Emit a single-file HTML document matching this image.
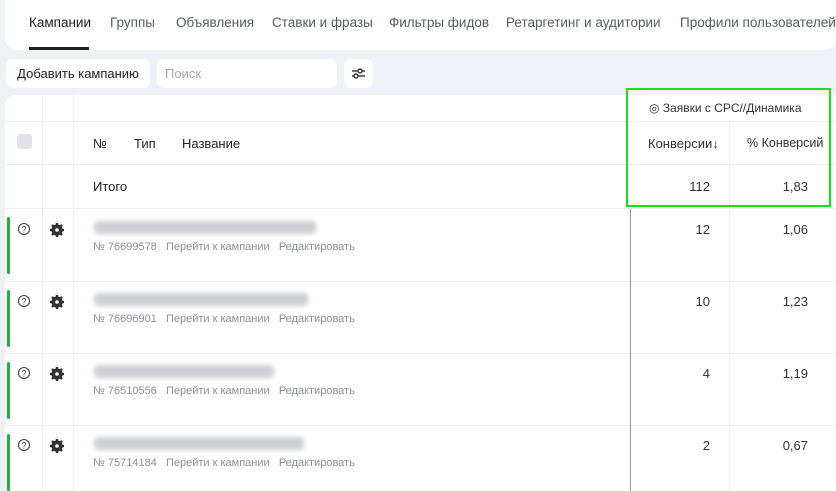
<!DOCTYPE html>
<html><head><meta charset="utf-8"><style>
body{margin:0;width:836px;height:491px;background:#eef1f6;font-family:"Liberation Sans",sans-serif;position:relative;overflow:hidden;color:#222}
.a{position:absolute;white-space:nowrap}
.tab{font-size:13.5px;color:#555c66;top:15px}
.hl{position:absolute;height:1px;background:#eceef2}
.vl{position:absolute;width:1px;background:#eceef2}
.sub{font-size:11px;color:#8a8f98}
.num{font-size:13px;color:#333;text-align:right}
.blur{position:absolute;height:13px;background:#cdd0d5;filter:blur(2.5px);border-radius:3px}
.gs{position:absolute;left:7px;width:3px;background:#1fb041;border-radius:2px}
</style></head><body>
<div class="a" style="left:5px;top:0;width:831px;height:50px;background:#fff;border-radius:0 0 12px 12px"></div>
<div class="a tab" style="left:29px;color:#222">Кампании</div>
<div class="a" style="left:29px;top:47px;width:60px;height:3px;background:#222"></div>
<div class="a tab" style="left:110px">Группы</div>
<div class="a tab" style="left:176px">Объявления</div>
<div class="a tab" style="left:272px">Ставки и фразы</div>
<div class="a tab" style="left:389px">Фильтры фидов</div>
<div class="a tab" style="left:506px">Ретаргетинг и аудитории</div>
<div class="a tab" style="left:680px">Профили пользователей</div>

<div class="a" style="left:6px;top:59px;width:144px;height:29px;background:#fff;border-radius:7px;font-size:13px;line-height:29px;text-align:center;color:#222">Добавить кампанию</div>
<div class="a" style="left:157px;top:59px;width:180px;height:29px;background:#fff;border-radius:7px;font-size:13px;line-height:29px;color:#aaa;padding-left:8px;box-sizing:border-box">Поиск</div>
<div class="a" style="left:344px;top:59px;width:29px;height:29px;background:#fff;border-radius:7px">
<svg width="29" height="29" viewBox="0 0 29 29"><g stroke="#333" stroke-width="1.4" fill="#fff"><line x1="8" y1="12" x2="21" y2="12"/><line x1="8" y1="17" x2="21" y2="17"/><circle cx="16" cy="12" r="2"/><circle cx="12" cy="17" r="2"/></g></svg></div>

<div class="a" style="left:5px;top:95px;width:831px;height:396px;background:#fff;border-radius:10px 0 0 0"></div>
<div class="hl" style="left:5px;top:121px;width:831px"></div>
<div class="hl" style="left:5px;top:164px;width:831px"></div>
<div class="hl" style="left:5px;top:208px;width:831px"></div>
<div class="hl" style="left:5px;top:281px;width:831px"></div>
<div class="hl" style="left:5px;top:353px;width:831px"></div>
<div class="hl" style="left:5px;top:425px;width:831px"></div>
<div class="vl" style="left:42px;top:95px;height:396px"></div>
<div class="vl" style="left:73px;top:95px;height:396px"></div>
<div class="vl" style="left:729px;top:121px;height:370px"></div>
<div class="a" style="left:630px;top:209px;width:1px;height:282px;background:#999"></div>
<div class="a" style="left:17px;top:134px;width:15px;height:15px;background:#dfe2ea;border-radius:3px"></div>

<div class="a" style="left:649px;top:101px;font-size:12px;color:#333">◎ Заявки с CPC//Динамика</div>
<div class="a" style="left:93px;top:136px;font-size:13px">№</div>
<div class="a" style="left:134px;top:136px;font-size:13px">Тип</div>
<div class="a" style="left:182px;top:136px;font-size:13px">Название</div>
<div class="a" style="left:648px;top:136px;font-size:13px;color:#333">Конверсии↓</div>
<div class="a" style="left:747px;top:136px;font-size:12.5px;color:#333">% Конверсий</div>
<div class="a" style="left:93px;top:179px;font-size:13px">Итого</div>
<div class="a num" style="right:126px;top:179px">112</div>
<div class="a num" style="right:28px;top:179px">1,83</div>

<div class="gs" style="top:217px;height:57px"></div>
<div class="gs" style="top:290px;height:57px"></div>
<div class="gs" style="top:362px;height:57px"></div>
<div class="gs" style="top:434px;height:57px"></div>

<svg class="a" style="left:0;top:0" width="80" height="491">
<defs><g id="q"><circle cx="0" cy="0" r="5.5" fill="none" stroke="#444" stroke-width="1.1"/><text x="0" y="3.5" font-size="9" text-anchor="middle" fill="#444" font-family="Liberation Sans">?</text></g>
<g id="g"><circle r="4.3" fill="none" stroke="#333" stroke-width="2.6"/><g stroke="#333" stroke-width="2.4"><line x1="0" y1="-7" x2="0" y2="7"/><line x1="-7" y1="0" x2="7" y2="0"/><line x1="-5" y1="-5" x2="5" y2="5"/><line x1="-5" y1="5" x2="5" y2="-5"/></g><circle r="1.8" fill="#fff"/></g></defs>
<use href="#q" x="24" y="229"/><use href="#g" x="57" y="230"/>
<use href="#q" x="24" y="301"/><use href="#g" x="57" y="302"/>
<use href="#q" x="24" y="373"/><use href="#g" x="57" y="374"/>
<use href="#q" x="24" y="445"/><use href="#g" x="57" y="446"/>
</svg>

<div class="blur" style="left:94px;top:221px;width:222px"></div>
<div class="blur" style="left:94px;top:293px;width:214px"></div>
<div class="blur" style="left:94px;top:365px;width:180px"></div>
<div class="blur" style="left:94px;top:437px;width:210px"></div>

<div class="a sub" style="left:93px;top:241px">№ 76699578&nbsp;&nbsp;&nbsp;Перейти к кампании&nbsp;&nbsp;&nbsp;Редактировать</div>
<div class="a sub" style="left:93px;top:313px">№ 76696901&nbsp;&nbsp;&nbsp;Перейти к кампании&nbsp;&nbsp;&nbsp;Редактировать</div>
<div class="a sub" style="left:93px;top:385px">№ 76510556&nbsp;&nbsp;&nbsp;Перейти к кампании&nbsp;&nbsp;&nbsp;Редактировать</div>
<div class="a sub" style="left:93px;top:457px">№ 75714184&nbsp;&nbsp;&nbsp;Перейти к кампании&nbsp;&nbsp;&nbsp;Редактировать</div>

<div class="a num" style="right:126px;top:222px">12</div><div class="a num" style="right:28px;top:222px">1,06</div>
<div class="a num" style="right:126px;top:294px">10</div><div class="a num" style="right:28px;top:294px">1,23</div>
<div class="a num" style="right:126px;top:366px">4</div><div class="a num" style="right:28px;top:366px">1,19</div>
<div class="a num" style="right:126px;top:438px">2</div><div class="a num" style="right:28px;top:438px">0,67</div>

<div class="a" style="left:626px;top:88px;width:201px;height:115px;border:2px solid #16e016"></div>
</body></html>
